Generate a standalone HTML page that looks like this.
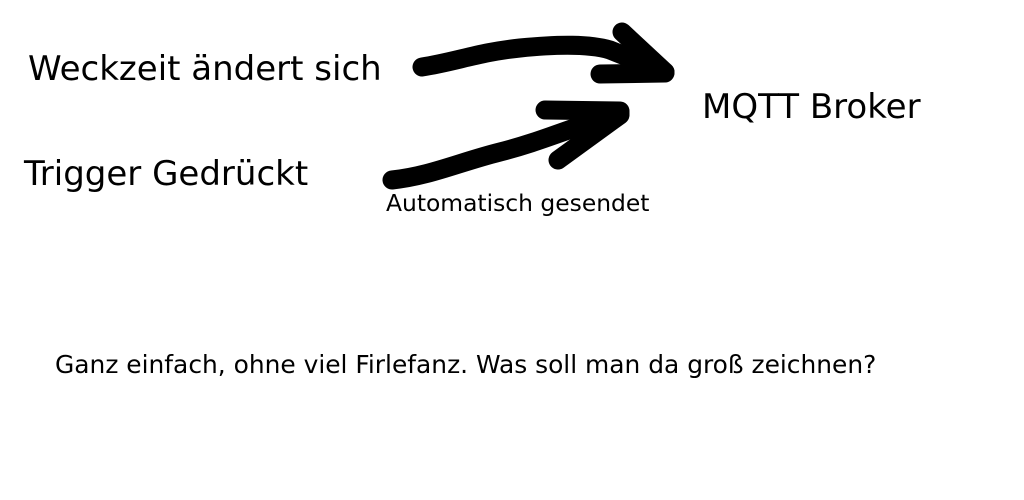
<!DOCTYPE html>
<html><head><style>
body{margin:0;width:1024px;height:500px;background:#fff;position:relative;overflow:hidden;font-family:"DejaVu Sans","Liberation Sans",sans-serif;color:#000}
.t{position:absolute;white-space:nowrap;line-height:1}
</style></head><body>
<div class="t" style="left:28px;top:52px;font-size:34px">Weckzeit ändert sich</div>
<div class="t" style="left:24px;top:157px;font-size:34px">Trigger Gedrückt</div>
<div class="t" style="left:702px;top:90px;font-size:34px">MQTT Broker</div>
<div class="t" style="left:386px;top:192px;font-size:23.4px">Automatisch gesendet</div>
<div class="t" style="left:55px;top:353px;font-size:24.9px">Ganz einfach, ohne viel Firlefanz. Was soll man da groß zeichnen?</div>
<svg width="1024" height="500" style="position:absolute;left:0;top:0" fill="none" stroke="#000" stroke-width="19" stroke-linecap="round" stroke-linejoin="round">
<path d="M422 67 C455 62 480 52 520 48 S590 44 610 50 L665 72"/>
<path d="M622 32 L665 72"/>
<path d="M600 74 L665 73"/>
<path d="M392 180 C430 176 460 162 500 152 S570 128 620 113"/>
<path d="M545 110 L620 111"/>
<path d="M558 160 L620 115"/>
</svg>
</body></html>
